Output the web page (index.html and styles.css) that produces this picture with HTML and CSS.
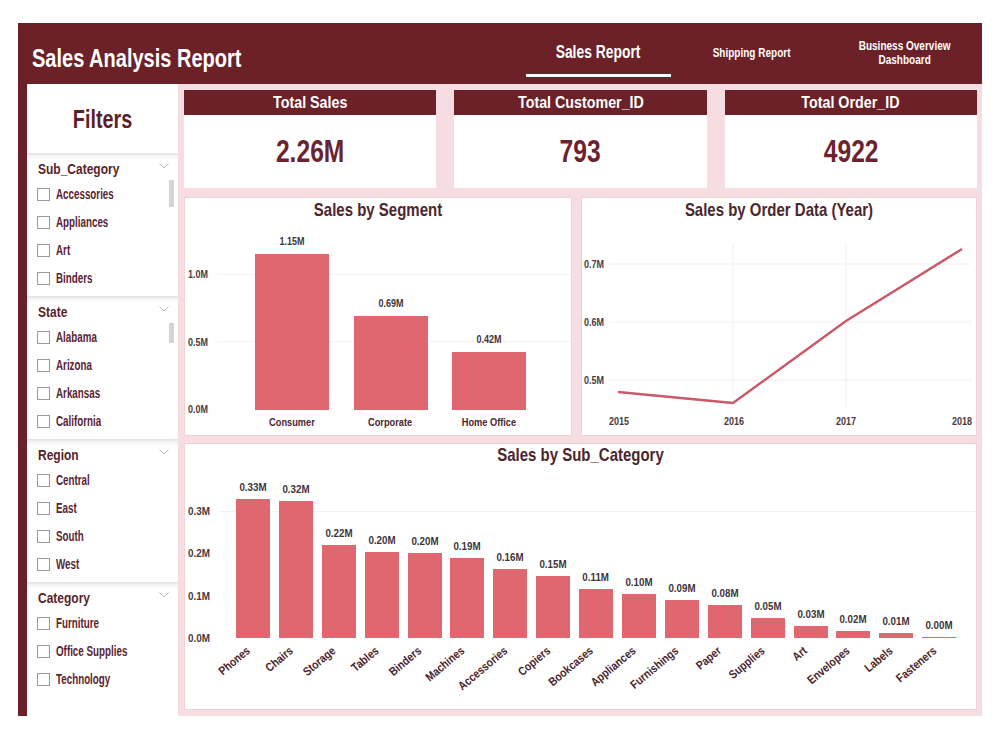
FILE: index.html
```html
<!DOCTYPE html>
<html>
<head>
<meta charset="utf-8">
<title>Sales Analysis Report</title>
<link rel="stylesheet" href="styles.css">
</head>
<body>
<div class="frame">
  <header class="topbar">
    <h1 class="title">Sales Analysis Report</h1>
    <nav class="nav">
      <div class="nav-item active"><span>Sales Report</span></div>
      <div class="nav-item small"><span>Shipping Report</span></div>
      <div class="nav-item small"><span>Business Overview<br>Dashboard</span></div>
    </nav>
  </header>
  <div class="body">
    <aside class="filters">
      <div class="filters-title">Filters</div>
      <section class="slicer">
        <div class="slicer-head"><span>Sub_Category</span><svg class="chev" viewBox="0 0 10 6" width="10" height="6"><polyline points="0.5,0.5 5,5 9.5,0.5"/></svg></div>
        <div class="slicer-body">
          <ul class="opts">
            <li><span class="cb"></span><span class="lbl">Accessories</span></li>
            <li><span class="cb"></span><span class="lbl">Appliances</span></li>
            <li><span class="cb"></span><span class="lbl">Art</span></li>
            <li><span class="cb"></span><span class="lbl">Binders</span></li>
          </ul>
          <div class="track"><div class="thumb t1"></div></div>
        </div>
      </section>
      <section class="slicer">
        <div class="slicer-head"><span>State</span><svg class="chev" viewBox="0 0 10 6" width="10" height="6"><polyline points="0.5,0.5 5,5 9.5,0.5"/></svg></div>
        <div class="slicer-body">
          <ul class="opts">
            <li><span class="cb"></span><span class="lbl">Alabama</span></li>
            <li><span class="cb"></span><span class="lbl">Arizona</span></li>
            <li><span class="cb"></span><span class="lbl">Arkansas</span></li>
            <li><span class="cb"></span><span class="lbl">California</span></li>
          </ul>
          <div class="track"><div class="thumb t2"></div></div>
        </div>
      </section>
      <section class="slicer">
        <div class="slicer-head"><span>Region</span><svg class="chev" viewBox="0 0 10 6" width="10" height="6"><polyline points="0.5,0.5 5,5 9.5,0.5"/></svg></div>
        <div class="slicer-body">
          <ul class="opts">
            <li><span class="cb"></span><span class="lbl">Central</span></li>
            <li><span class="cb"></span><span class="lbl">East</span></li>
            <li><span class="cb"></span><span class="lbl">South</span></li>
            <li><span class="cb"></span><span class="lbl">West</span></li>
          </ul>
        </div>
      </section>
      <section class="slicer last">
        <div class="slicer-head"><span>Category</span><svg class="chev" viewBox="0 0 10 6" width="10" height="6"><polyline points="0.5,0.5 5,5 9.5,0.5"/></svg></div>
        <div class="slicer-body">
          <ul class="opts">
            <li><span class="cb"></span><span class="lbl">Furniture</span></li>
            <li><span class="cb"></span><span class="lbl">Office Supplies</span></li>
            <li><span class="cb"></span><span class="lbl">Technology</span></li>
          </ul>
        </div>
      </section>
    </aside>

    <main class="main">
      <div class="kpis">
        <div class="kpi"><div class="kpi-head"><span>Total Sales</span></div><div class="kpi-val">2.26M</div></div>
        <div class="kpi"><div class="kpi-head"><span>Total Customer_ID</span></div><div class="kpi-val">793</div></div>
        <div class="kpi"><div class="kpi-head"><span>Total Order_ID</span></div><div class="kpi-val">4922</div></div>
      </div>

      <div class="row2">
        <div class="panel seg">
          <div class="chart-title">Sales by Segment</div>
          <div class="seg-chart">
            <div class="yaxis seg-y"><span>1.0M</span><span>0.5M</span><span>0.0M</span></div>
            <div class="seg-plot">
              <div class="col seg-col"><div class="val">1.15M</div><div class="bar" style="height:156px"></div><div class="xlab">Consumer</div></div>
              <div class="col seg-col"><div class="val">0.69M</div><div class="bar" style="height:94px"></div><div class="xlab">Corporate</div></div>
              <div class="col seg-col"><div class="val">0.42M</div><div class="bar" style="height:58px"></div><div class="xlab">Home Office</div></div>
            </div>
          </div>
        </div>

        <div class="panel line">
          <div class="chart-title">Sales by Order Data (Year)</div>
          <svg class="line-svg" viewBox="0 0 395 213" width="395" height="213">
            <g class="grid">
              <line x1="28" y1="42" x2="390" y2="42"/>
              <line x1="28" y1="100" x2="390" y2="100"/>
              <line x1="28" y1="158" x2="390" y2="158"/>
              <line x1="152" y1="22" x2="152" y2="185"/>
              <line x1="265" y1="22" x2="265" y2="185"/>
            </g>
            <g class="ylab">
              <text x="3" y="46" textLength="20" lengthAdjust="spacingAndGlyphs">0.7M</text>
              <text x="3" y="104" textLength="20" lengthAdjust="spacingAndGlyphs">0.6M</text>
              <text x="3" y="162" textLength="20" lengthAdjust="spacingAndGlyphs">0.5M</text>
            </g>
            <polyline class="trend" points="37,170 152,181 265,99 381,27"/>
            <g class="xyear">
              <text x="28" y="203" textLength="20" lengthAdjust="spacingAndGlyphs">2015</text>
              <text x="143" y="203" textLength="20" lengthAdjust="spacingAndGlyphs">2016</text>
              <text x="255" y="203" textLength="20" lengthAdjust="spacingAndGlyphs">2017</text>
              <text x="371" y="203" textLength="20" lengthAdjust="spacingAndGlyphs">2018</text>
            </g>
          </svg>
        </div>
      </div>

      <div class="panel sub">
        <div class="chart-title sub-title">Sales by Sub_Category</div>
        <div class="sub-chart">
          <div class="yaxis sub-y"><span>0.3M</span><span>0.2M</span><span>0.1M</span><span>0.0M</span></div>
          <div class="sub-plot">
            <div class="col sub-col"><div class="val">0.33M</div><div class="bar" style="height:138.7px"></div><div class="rot"><span>Phones</span></div></div>
            <div class="col sub-col"><div class="val">0.32M</div><div class="bar" style="height:136.7px"></div><div class="rot"><span>Chairs</span></div></div>
            <div class="col sub-col"><div class="val">0.22M</div><div class="bar" style="height:93.3px"></div><div class="rot"><span>Storage</span></div></div>
            <div class="col sub-col"><div class="val">0.20M</div><div class="bar" style="height:86px"></div><div class="rot"><span>Tables</span></div></div>
            <div class="col sub-col"><div class="val">0.20M</div><div class="bar" style="height:85px"></div><div class="rot"><span>Binders</span></div></div>
            <div class="col sub-col"><div class="val">0.19M</div><div class="bar" style="height:80px"></div><div class="rot"><span>Machines</span></div></div>
            <div class="col sub-col"><div class="val">0.16M</div><div class="bar" style="height:69.3px"></div><div class="rot"><span>Accessories</span></div></div>
            <div class="col sub-col"><div class="val">0.15M</div><div class="bar" style="height:62px"></div><div class="rot"><span>Copiers</span></div></div>
            <div class="col sub-col"><div class="val">0.11M</div><div class="bar" style="height:48.7px"></div><div class="rot"><span>Bookcases</span></div></div>
            <div class="col sub-col"><div class="val">0.10M</div><div class="bar" style="height:44.3px"></div><div class="rot"><span>Appliances</span></div></div>
            <div class="col sub-col"><div class="val">0.09M</div><div class="bar" style="height:37.7px"></div><div class="rot"><span>Furnishings</span></div></div>
            <div class="col sub-col"><div class="val">0.08M</div><div class="bar" style="height:32.7px"></div><div class="rot"><span>Paper</span></div></div>
            <div class="col sub-col"><div class="val">0.05M</div><div class="bar" style="height:20px"></div><div class="rot"><span>Supplies</span></div></div>
            <div class="col sub-col"><div class="val">0.03M</div><div class="bar" style="height:12px"></div><div class="rot"><span>Art</span></div></div>
            <div class="col sub-col"><div class="val">0.02M</div><div class="bar" style="height:7px"></div><div class="rot"><span>Envelopes</span></div></div>
            <div class="col sub-col"><div class="val">0.01M</div><div class="bar" style="height:5.3px"></div><div class="rot"><span>Labels</span></div></div>
            <div class="col sub-col"><div class="val">0.00M</div><div class="bar" style="height:1.5px"></div><div class="rot"><span>Fasteners</span></div></div>
          </div>
        </div>
      </div>
    </main>
  </div>
</div>
</body>
</html>
```

FILE: styles.css
```css
* { box-sizing: border-box; margin: 0; padding: 0; }

body {
  background: #ffffff;
  font-family: "Liberation Sans", Arial, sans-serif;
  color: #5a1f28;
}

.frame {
  margin: 23px 0 0 18px;
  width: 964px;
  height: 693px;
  background: #6c2129;
  display: flex;
  flex-direction: column;
}

/* ---------- top bar ---------- */
.topbar {
  height: 61px;
  flex: none;
  display: flex;
  justify-content: space-between;
  padding: 0 5px 0 14px;
  color: #ffffff;
}

.title {
  font-size: 26.5px;
  font-weight: 700;
  line-height: 30px;
  padding-top: 20px;
  white-space: nowrap;
  transform: scaleX(0.755);
  transform-origin: 0 50%;
}

.nav {
  display: flex;
  gap: 8px;
  align-items: flex-start;
}

.nav-item {
  width: 145px;
  height: 54px;
  padding-top: 8px;
  display: flex;
  align-items: center;
  justify-content: center;
  text-align: center;
  font-weight: 700;
  border-bottom: 3px solid transparent;
}

.nav-item span {
  display: inline-block;
  white-space: nowrap;
  transform: scaleX(0.77);
}

.nav-item.active {
  font-size: 18px;
  border-bottom-color: #ffffff;
}

.nav-item.small {
  font-size: 13px;
  line-height: 14px;
}

/* ---------- body ---------- */
.body {
  flex: 1;
  display: flex;
  padding-left: 9px;
  min-height: 0;
}

/* ---------- filters ---------- */
.filters {
  width: 151px;
  flex: none;
  background: #ffffff;
  display: flex;
  flex-direction: column;
}

.filters-title {
  height: 69px;
  flex: none;
  display: flex;
  align-items: center;
  justify-content: center;
  font-size: 25px;
  font-weight: 700;
  color: #5a1f28;
  padding-top: 2px;
  transform: scaleX(0.79);
}

.slicer {
  height: 143px;
  flex: none;
  padding: 7px 0 4px 10px;
  background: linear-gradient(#e3dfe0 0px, #f6f4f4 3px, #ffffff 7px);
}

.slicer.last {
  flex: 1;
}

.slicer-head {
  display: flex;
  justify-content: space-between;
  align-items: center;
  height: 16px;
  margin-bottom: 4px;
  padding-right: 9px;
  font-size: 15px;
  font-weight: 700;
  color: #5a1f28;
}

.slicer-head span {
  display: inline-block;
  margin-left: 1px;
  white-space: nowrap;
  transform: scaleX(0.8);
  transform-origin: 0 50%;
}

.chev {
  fill: none;
  stroke: #b7b2b3;
  stroke-width: 1;
  margin-top: -4px;
}

.slicer-body {
  display: flex;
}

.opts {
  list-style: none;
  flex: 1;
}

.opts li {
  height: 28px;
  display: flex;
  align-items: center;
  font-size: 14px;
  font-weight: 700;
  color: #5a2330;
}

.lbl {
  display: inline-block;
  white-space: nowrap;
  transform: scaleX(0.7);
  transform-origin: 0 50%;
}

.cb {
  width: 13px;
  height: 13px;
  border: 1px solid #9e9a9b;
  background: #ffffff;
  margin-right: 6px;
  flex: none;
}

.track {
  width: 5px;
  margin-right: 4px;
  flex: none;
}

.thumb {
  width: 5px;
  background: #d6d3d4;
}

.thumb.t1 { height: 27px; }
.thumb.t2 { height: 20px; }

/* ---------- main ---------- */
.main {
  flex: 1;
  background: #f5dde1;
  padding: 6px 5px 6px 6px;
  display: flex;
  flex-direction: column;
  gap: 9px;
}

.kpis {
  display: grid;
  grid-template-columns: 1fr 1fr 1fr;
  gap: 18px;
  height: 98px;
  flex: none;
}

.kpi {
  display: flex;
  flex-direction: column;
  background: #ffffff;
}

.kpi-head {
  height: 25px;
  background: #6c2129;
  color: #ffffff;
  font-size: 17px;
  font-weight: 700;
  line-height: 25px;
  text-align: center;
}

.kpi-head span {
  display: inline-block;
  white-space: nowrap;
  transform: scaleX(0.84);
}

.kpi-val {
  flex: 1;
  display: flex;
  align-items: center;
  justify-content: center;
  font-size: 32px;
  font-weight: 700;
  color: #6b2330;
  transform: scaleX(0.77);
}

.row2 {
  display: grid;
  grid-template-columns: 389fr 395fr;
  gap: 9px;
  height: 237px;
  flex: none;
}

.panel {
  background: #ffffff;
  border: 1px solid #efd3d8;
  display: flex;
  flex-direction: column;
}

.chart-title {
  height: 24px;
  line-height: 24px;
  text-align: center;
  font-size: 18.5px;
  font-weight: 700;
  color: #4b262d;
  flex: none;
  white-space: nowrap;
  transform: scaleX(0.81);
}

/* ---------- shared bar chart ---------- */
.yaxis {
  display: flex;
  flex-direction: column;
  align-self: flex-end;
  font-size: 10px;
  font-weight: 700;
  color: #4a3a3e;
  flex: none;
}

.yaxis span {
  display: block;
  line-height: 12px;
  height: 12px;
  white-space: nowrap;
  transform: scaleX(0.9);
  transform-origin: 0 50%;
}

.col {
  display: flex;
  flex-direction: column;
  align-items: center;
}

.val {
  line-height: 12px;
  height: 12px;
  margin-bottom: 6px;
  font-size: 10px;
  font-weight: 700;
  color: #40343a;
  white-space: nowrap;
  transform: scaleX(0.9);
}

.bar {
  width: 100%;
  background: #e0666f;
}

/* ---------- segment chart ---------- */
.seg-chart {
  display: flex;
  align-items: flex-end;
  padding-left: 3px;
  height: 206px;
  flex: none;
}

.seg-y {
  width: 30px;
  gap: 55.5px;
  margin-bottom: 12px;
}

.seg-plot {
  flex: 1;
  align-self: stretch;
  display: flex;
  align-items: flex-end;
  gap: 24.5px;
  padding-left: 37px;
  background:
    linear-gradient(to top, transparent 85.5px, #f6f0f1 85.5px, #f6f0f1 86.5px, transparent 86.5px),
    linear-gradient(to top, transparent 153px, #f6f0f1 153px, #f6f0f1 154px, transparent 154px);
}

.seg-col {
  width: 74px;
}

.xlab {
  margin-top: 6px;
  line-height: 12px;
  height: 12px;
  font-size: 10.5px;
  font-weight: 700;
  color: #4b262d;
  white-space: nowrap;
  transform: scaleX(0.88);
}

/* ---------- line chart ---------- */
.line-svg {
  display: block;
  margin-left: -1px;
}

.line-svg .grid line {
  stroke: #f5eef0;
  stroke-width: 1;
}

.line-svg text {
  font-family: "Liberation Sans", Arial, sans-serif;
  font-size: 10.5px;
  font-weight: 700;
  fill: #4a3a3e;
}

.trend {
  fill: none;
  stroke: #c95a69;
  stroke-width: 2.5;
  stroke-linejoin: round;
}

/* ---------- sub category chart ---------- */
.sub {
  flex: 1;
}

.sub-title {
  height: 22px;
  line-height: 22px;
}

.sub-chart {
  display: flex;
  padding-left: 3px;
  height: 172px;
}

.sub-y {
  width: 30px;
  gap: 30.3px;
  margin-bottom: -6px;
  font-size: 11.5px;
}

.sub-y span {
  transform: scaleX(0.86);
}

.sub-plot {
  flex: 1;
  display: flex;
  align-items: flex-end;
  gap: 8.9px;
  padding-left: 18px;
  background: linear-gradient(to top, transparent 126.5px, #f6f0f1 126.5px, #f6f0f1 127.5px, transparent 127.5px);
}

.sub-col {
  width: 34px;
  height: 190px;
  justify-content: flex-end;
  margin-bottom: -18px;
}

.sub-col .val {
  font-size: 11.5px;
  transform: scaleX(0.85);
}

.rot {
  width: 0;
  height: 14px;
  margin-top: 4px;
  display: flex;
  justify-content: flex-end;
  align-items: center;
}

.rot span {
  display: block;
  white-space: nowrap;
  line-height: 14px;
  font-size: 12px;
  font-weight: 700;
  color: #4b262d;
  transform: translateX(-5px) rotate(-40deg) scaleX(0.85);
  transform-origin: 100% 50%;
}
```
